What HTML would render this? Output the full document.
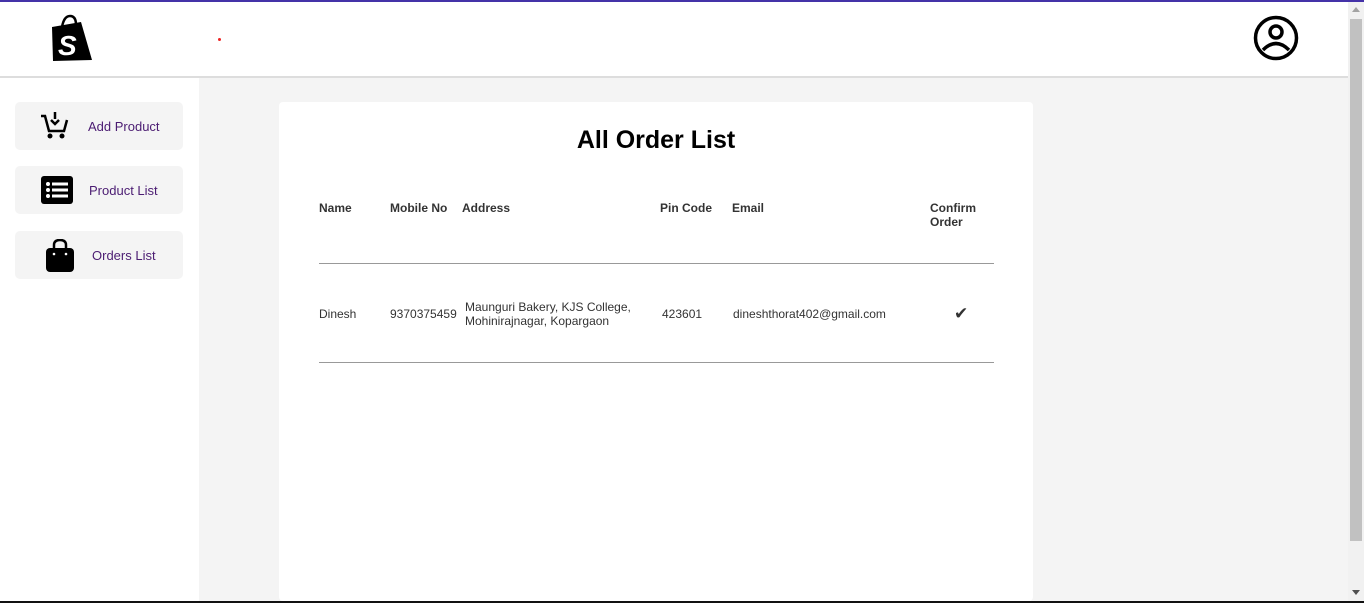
<!DOCTYPE html>
<html><head><style>
*{margin:0;padding:0;box-sizing:border-box}
body{width:1364px;height:603px;overflow:hidden;background:#fff;font-family:"Liberation Sans",Arial,sans-serif;position:relative}
.a{position:absolute}
.btn{position:absolute;left:15px;width:168px;height:48px;background:#f4f4f4;border-radius:5px}
.btn span{position:absolute;font-size:13px;color:#4b1c72;top:17px}
.th{position:absolute;font-size:12px;font-weight:bold;color:#333;line-height:14px}
.td{position:absolute;font-size:12px;color:#333;line-height:14px}
</style></head><body>
<div class="a" style="left:0;top:0;width:1364px;height:2px;background:#4432a8"></div>
<div class="a" style="left:0;top:76px;width:1348px;height:2px;background:#ddd"></div>
<div class="a" style="left:199px;top:78px;width:1149px;height:523px;background:#f4f4f4"></div>
<div class="a" style="left:1348px;top:2px;width:16px;height:599px;background:#f1f1f1"></div>
<div class="a" style="left:1350px;top:19px;width:12px;height:522px;background:#c1c1c1"></div>
<div class="a" style="left:1352px;top:7px;width:0;height:0;border-left:4px solid transparent;border-right:4px solid transparent;border-bottom:5px solid #a3a3a3"></div>
<div class="a" style="left:1352px;top:590px;width:0;height:0;border-left:4px solid transparent;border-right:4px solid transparent;border-top:5px solid #505050"></div>
<div class="a" style="left:0;top:601px;width:1364px;height:2px;background:#111"></div>
<svg class="a" style="left:48px;top:13px" width="46" height="50" viewBox="0 0 46 50">
<path d="M4 14 L33 9 L44 47 L5 48 Z" fill="#000"/>
<path d="M14 14 Q16 3 22 3 Q28 3 28 12" stroke="#000" stroke-width="2.5" fill="none"/>
<text x="10" y="42" font-family="Liberation Sans" font-weight="bold" font-style="italic" font-size="28" fill="#fff">S</text>
</svg>
<div class="a" style="left:218px;top:38px;width:3px;height:3px;background:#e22;border-radius:50%"></div>
<svg class="a" style="left:1253px;top:15px" width="46" height="46" viewBox="0 0 46 46">
<circle cx="23" cy="23" r="20.5" stroke="#000" stroke-width="3.5" fill="none"/>
<circle cx="23" cy="17" r="6" stroke="#000" stroke-width="3.5" fill="none"/>
<path d="M10 35 Q23 22 36 35" stroke="#000" stroke-width="3.5" fill="none"/>
</svg>
<div class="btn" style="top:102px"><span style="left:73px">Add Product</span>
<svg class="a" style="left:25px;top:9px" width="30" height="30" viewBox="0 0 30 30">
<path d="M1 5 L5 5 L9 20 L24 20 L27 9" stroke="#000" stroke-width="2.5" fill="none"/>
<path d="M15 1 L15 8 M11 9 L15 13 L19 9" stroke="#000" stroke-width="2.5" fill="none"/>
<circle cx="10" cy="25" r="2.5"/><circle cx="22" cy="25" r="2.5"/></svg></div>
<div class="btn" style="top:166px"><span style="left:74px">Product List</span>
<svg class="a" style="left:26px;top:10px" width="32" height="28" viewBox="0 0 32 28">
<rect x="0" y="0" width="32" height="28" rx="3"/>
<g fill="#fff"><circle cx="7" cy="8" r="2"/><circle cx="7" cy="14" r="2"/><circle cx="7" cy="20" r="2"/>
<rect x="11" y="6.5" width="16" height="3"/><rect x="11" y="12.5" width="16" height="3"/><rect x="11" y="18.5" width="16" height="3"/></g></svg></div>
<div class="btn" style="top:231px"><span style="left:77px">Orders List</span>
<svg class="a" style="left:30px;top:8px" width="30" height="33" viewBox="0 0 30 33">
<path d="M9 10 L9 6 Q9 1 15 1 Q21 1 21 6 L21 10" stroke="#000" stroke-width="2.5" fill="none"/>
<rect x="1" y="9" width="28" height="24" rx="4"/>
<circle cx="9" cy="15" r="1.3" fill="#fff"/><circle cx="21" cy="15" r="1.3" fill="#fff"/></svg></div>
<div class="a" style="left:279px;top:102px;width:754px;height:499px;background:#fff;border-radius:4px"></div>
<div class="a" style="left:279px;top:126px;width:754px;text-align:center;font-size:25px;font-weight:bold;color:#000">All Order List</div>
<div class="th" style="left:319px;top:201px">Name</div>
<div class="th" style="left:390px;top:201px">Mobile No</div>
<div class="th" style="left:462px;top:201px">Address</div>
<div class="th" style="left:660px;top:201px">Pin Code</div>
<div class="th" style="left:732px;top:201px">Email</div>
<div class="th" style="left:930px;top:201px">Confirm<br>Order</div>
<div class="a" style="left:319px;top:263px;width:675px;height:1px;background:#999"></div>
<div class="td" style="left:319px;top:307px">Dinesh</div>
<div class="td" style="left:390px;top:307px">9370375459</div>
<div class="td" style="left:465px;top:300px">Maunguri Bakery, KJS College,<br>Mohinirajnagar, Kopargaon</div>
<div class="td" style="left:662px;top:307px">423601</div>
<div class="td" style="left:733px;top:307px">dineshthorat402@gmail.com</div>
<div class="a" style="left:954px;top:304px;font-size:17px;color:#333">✔</div>
<div class="a" style="left:319px;top:362px;width:675px;height:1px;background:#999"></div>
</body></html>
